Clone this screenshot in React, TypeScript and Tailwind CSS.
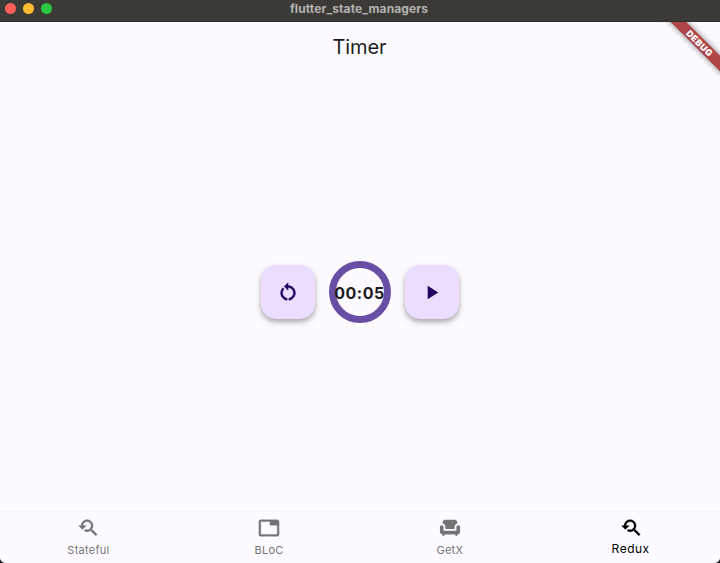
import type { ReactNode } from 'react';
import { MdChair, MdPlayArrow, MdRestartAlt, MdTab, MdYoutubeSearchedFor } from 'react-icons/md';

function TitleBar() {
  return (
    <header className="relative flex h-[22px] shrink-0 items-start justify-center border-b border-[#302f2c] bg-[#3b3a37]">
      <div className="absolute left-[5px] top-[3px] flex gap-[7px]">
        <span className="size-[11px] rounded-full bg-[#ff5f57]" />
        <span className="size-[11px] rounded-full bg-[#febc2e]" />
        <span className="size-[11px] rounded-full bg-[#28c840]" />
      </div>
      <h1 className="-ml-[2px] mt-px whitespace-nowrap text-[12px] font-bold leading-4 tracking-[0.1px] text-[#b5b4b2]">
        flutter_state_managers
      </h1>
    </header>
  );
}

function DebugBanner() {
  return (
    <div className="pointer-events-none absolute right-0 top-0 size-20 overflow-hidden">
      <div className="absolute left-[9px] top-[15px] flex h-[11px] w-[100px] rotate-45 items-center justify-center bg-[#ae4547] pl-[2px] text-[9px] font-black leading-none tracking-[0.4px] text-white shadow-[0_0_6px_rgba(0,0,0,0.5)]">
        DEBUG
      </div>
    </div>
  );
}

function ActionButton({ label, children }: { label: string; children: ReactNode }) {
  return (
    <button
      aria-label={label}
      className="flex size-[54px] items-center justify-center rounded-[15px] bg-[#eaddff] text-[#21005d] shadow-[0_3px_5px_rgba(0,0,0,0.26),0_3px_9px_rgba(0,0,0,0.1)]"
    >
      {children}
    </button>
  );
}

function NavItem({ label, active = false, children }: { label: string; active?: boolean; children: ReactNode }) {
  return (
    <a className={active ? 'flex flex-1 flex-col items-center pt-[5px] text-black' : 'flex flex-1 flex-col items-center pt-[5px] text-[#747375]'}>
      {children}
      <span className={active ? 'mt-[2px] text-[12px] leading-4 tracking-[0.5px]' : 'mt-[3px] text-[11px] leading-4 tracking-[0.25px]'}>
        {label}
      </span>
    </a>
  );
}

export default function App() {
  return (
    <div className="h-[563px] w-[720px] bg-black font-['Inter',sans-serif]">
      <div className="flex h-full flex-col overflow-hidden rounded-b-[5px] bg-[#fdfbff] [&_path[fill=none]]:stroke-none">
        <TitleBar />
        <div className="relative flex min-h-0 flex-1 flex-col">
          <h2 className="flex h-[50px] items-center justify-center pr-px text-[20px] tracking-[-0.1px] text-[#1c1b1e]">Timer</h2>
          <main className="flex flex-1 items-center justify-center gap-[14px] pr-px pt-[1px]">
            <ActionButton label="Reset">
              <MdRestartAlt size={22} strokeWidth={0.6} />
            </ActionButton>
            <div className="flex size-[62px] items-center justify-center rounded-full border-[7px] border-[#6750a4]">
              <span className="whitespace-nowrap pt-px text-[16px] font-bold leading-5 tracking-[0.5px] text-[#1c1b1e]">00:05</span>
            </div>
            <ActionButton label="Start">
              <MdPlayArrow size={23} />
            </ActionButton>
          </main>
          <nav className="-ml-[2px] -mr-px flex h-[52px] border-t border-[#f6f4f8]">
            <NavItem label="Stateful">
              <MdYoutubeSearchedFor size={22} strokeWidth={0.5} />
            </NavItem>
            <NavItem label="BLoC">
              <MdTab size={22} strokeWidth={0.4} />
            </NavItem>
            <NavItem label="GetX">
              <MdChair size={22} />
            </NavItem>
            <NavItem label="Redux" active>
              <MdYoutubeSearchedFor size={22} strokeWidth={0.5} />
            </NavItem>
          </nav>
          <DebugBanner />
        </div>
      </div>
    </div>
  );
}
